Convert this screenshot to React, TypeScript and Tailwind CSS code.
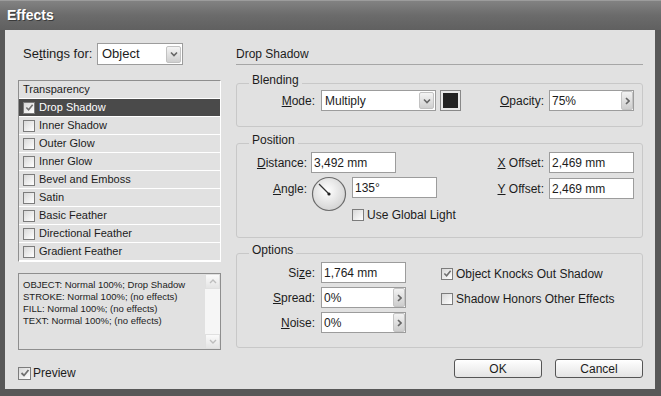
import React from 'react';

// small checkbox, XP style
const Check = ({ checked = false }: { checked?: boolean }) => (
    <span className="w-[12px] h-[12px] shrink-0 border border-[#7c7c7c] bg-linear-to-br from-[#d8d8d8] to-white flex items-center justify-center">
        {checked && (
            <svg width="9" height="9" viewBox="0 0 10 10">
                <path d="M1.5 5 L4 7.5 L8.5 2" stroke="#707070" strokeWidth="1.8" fill="none" />
            </svg>
        )}
    </span>
);

const DropBtn = () => (
    <span className="w-[15px] h-[17px] shrink-0 rounded-[2px] bg-linear-to-b from-[#f4f4f4] to-[#cfcfcf] border border-[#c2c2c2] flex items-center justify-center">
        <svg width="8" height="6" viewBox="0 0 8 6">
            <path d="M1 1.5 L4 4.5 L7 1.5" stroke="#666" strokeWidth="1.6" fill="none" />
        </svg>
    </span>
);

const SpinBtn = () => (
    <span className="w-[12px] h-[19px] shrink-0 rounded-[2px] bg-linear-to-b from-[#f2f2f2] to-[#cdcdcd] border border-[#c4c4c4] flex items-center justify-center">
        <svg width="5" height="8" viewBox="0 0 5 8">
            <path d="M1 1 L4 4 L1 7" stroke="#666" strokeWidth="1.6" fill="none" />
        </svg>
    </span>
);

const Field = ({ value, spin = false }: { value: string; spin?: boolean }) => (
    <div className="w-[85px] h-[21px] bg-white border border-[#9c9c9c] flex items-center pl-[2px] pr-[0px] text-[12px]">
        <span className="flex-1">{value}</span>
        {spin && <SpinBtn />}
    </div>
);

const Group = ({ title, height, children }: { title: string; height: string; children: React.ReactNode }) => (
    <div className={`${height} rounded-[3px] border border-[#c8c8c8] flex flex-col`}>
        <div className="-mt-[11px] ml-[12px] px-[3px] w-fit bg-[#e1e1e1] leading-[14px] text-[12px]">
            {title}
        </div>
        {children}
    </div>
);

const effects = [
    'Drop Shadow',
    'Inner Shadow',
    'Outer Glow',
    'Inner Glow',
    'Bevel and Emboss',
    'Satin',
    'Basic Feather',
    'Directional Feather',
    'Gradient Feather',
];

const summary = [
    'OBJECT: Normal 100%; Drop Shadow',
    'STROKE: Normal 100%; (no effects)',
    'FILL: Normal 100%; (no effects)',
    'TEXT: Normal 100%; (no effects)',
];

export default function App() {
    return (
        <div className="w-[661px] h-[396px] bg-[#585858] flex flex-col font-['Liberation_Sans',Arial,sans-serif] text-[#1c1c1c] select-none">
            {/* title bar */}
            <div className="h-[30px] shrink-0 border-t border-[#9c9c9c] bg-linear-to-b from-[#828282] via-[#6b6b6b] to-[#606060] flex items-center pl-[7px]">
                <span className="text-white font-bold text-[14px] [text-shadow:1px_1px_0_#3a3a3a]">Effects</span>
            </div>

            <div className="flex-1 ml-[5px] mr-[6px] mb-[7px] bg-[#e1e1e1] flex pl-[13px] pt-[13px]">
                {/* left side */}
                <div className="w-[203px] flex flex-col">
                    <div className="h-[22px] flex items-center text-[13px]">
                        <span className="ml-[5px] w-[74px]">
                            Se<u>t</u>tings for:
                        </span>
                        <div className="w-[86px] h-[22px] bg-white border border-[#9c9c9c] flex items-center pl-[4px] pr-[1px]">
                            <span className="flex-1">Object</span>
                            <DropBtn />
                        </div>
                    </div>

                    <div className="mt-[15px] h-[182px] border border-t-[#8e8e8e] border-l-[#8e8e8e] border-r-white border-b-white text-[11px]">
                        <div className="h-[18px] border-b border-white flex items-center pl-[4px]">Transparency</div>
                        {effects.map((name, i) => (
                            <div
                                key={name}
                                className={
                                    i === 0
                                        ? 'h-[18px] border-b border-white flex items-center pl-[4px] gap-[4px] bg-[#4a4a4a] text-white'
                                        : 'h-[18px] border-b border-white flex items-center pl-[4px] gap-[4px]'
                                }
                            >
                                <Check checked={i === 0} />
                                <span>{name}</span>
                            </div>
                        ))}
                    </div>

                    <div className="mt-[11px] h-[77px] border border-[#8e8e8e] flex">
                        <div className="flex-1 pt-[5px] pl-[4px] text-[9.5px] leading-[12px]">
                            {summary.map(line => (
                                <div key={line}>{line}</div>
                            ))}
                        </div>
                        <div className="w-[15px] bg-[#f6f6f6] flex flex-col justify-between">
                            <span className="h-[15px] bg-linear-to-b from-[#fafafa] to-[#e4e4e4] border border-[#e0e0e0] flex items-center justify-center">
                                <svg width="8" height="5" viewBox="0 0 8 5">
                                    <path d="M1 4 L4 1 L7 4" stroke="#bdbdbd" strokeWidth="1.4" fill="none" />
                                </svg>
                            </span>
                            <span className="h-[15px] bg-linear-to-b from-[#fafafa] to-[#e4e4e4] border border-[#e0e0e0] flex items-center justify-center">
                                <svg width="8" height="5" viewBox="0 0 8 5">
                                    <path d="M1 1 L4 4 L7 1" stroke="#bdbdbd" strokeWidth="1.4" fill="none" />
                                </svg>
                            </span>
                        </div>
                    </div>

                    <div className="mt-[14px] flex items-center gap-[2px] text-[12px]">
                        <span className="w-[13px] h-[13px] border border-[#7c7c7c] bg-linear-to-br from-[#d8d8d8] to-white flex items-center justify-center">
                            <svg width="10" height="10" viewBox="0 0 10 10">
                                <path d="M1.5 5 L4 7.5 L8.5 2" stroke="#707070" strokeWidth="1.8" fill="none" />
                            </svg>
                        </span>
                        <span>Preview</span>
                    </div>
                </div>

                {/* right side */}
                <div className="ml-[15px] w-[407px] flex flex-col text-[12px]">
                    <div className="h-[22px] border-b border-[#a6a6a6] flex items-center">Drop Shadow</div>

                    <div className="mt-[18px]">
                        <Group title="Blending" height="h-[44px]">
                            <div className="mt-[3px] h-[21px] flex items-center pr-[8px]">
                                <span className="w-[78px] text-right">
                                    <u>M</u>ode:
                                </span>
                                <div className="ml-[6px] w-[115px] h-[21px] bg-white border border-[#9c9c9c] flex items-center pl-[3px] pr-[1px]">
                                    <span className="flex-1">Multiply</span>
                                    <DropBtn />
                                </div>
                                <span className="ml-[4px] w-[21px] h-[21px] border border-[#888] bg-[#e8e8e8] p-[2px]">
                                    <span className="block w-full h-full bg-[#222]" />
                                </span>
                                <span className="ml-auto mr-[5px]">
                                    <u>O</u>pacity:
                                </span>
                                <Field value="75%" spin />
                            </div>
                        </Group>
                    </div>

                    <div className="mt-[16px]">
                        <Group title="Position" height="h-[95px]">
                            <div className="mt-[5px] flex pr-[8px]">
                                <div className="w-[70px] flex flex-col items-end gap-[5px]">
                                    <span className="h-[21px] flex items-center">
                                        <u>D</u>istance:
                                    </span>
                                    <span className="h-[21px] flex items-center">
                                        <u>A</u>ngle:
                                    </span>
                                </div>
                                <div className="ml-[4px] flex flex-col">
                                    <Field value="3,492 mm" />
                                    <div className="mt-[4px] flex">
                                        <svg width="36" height="36" viewBox="0 0 36 36" className="-mt-[1px]">
                                            <defs>
                                                <radialGradient id="dial" cx="45%" cy="40%" r="60%">
                                                    <stop offset="0%" stopColor="#ffffff" />
                                                    <stop offset="100%" stopColor="#d4d4d4" />
                                                </radialGradient>
                                            </defs>
                                            <circle cx="18" cy="18" r="16.5" fill="url(#dial)" stroke="#6c6c6c" strokeWidth="1.2" />
                                            <line x1="18" y1="18" x2="8" y2="8" stroke="#333" strokeWidth="1.2" />
                                            <circle cx="18" cy="18" r="1.6" fill="#222" />
                                        </svg>
                                        <div className="ml-[5px] flex flex-col">
                                            <Field value="135°" />
                                            <div className="mt-[8px] flex items-center gap-[3px]">
                                                <Check />
                                                <span>Use Global Light</span>
                                            </div>
                                        </div>
                                    </div>
                                </div>
                                <div className="ml-auto flex gap-[5px]">
                                    <div className="flex flex-col items-end gap-[5px]">
                                        <span className="h-[21px] flex items-center">
                                            <u>X</u>&nbsp;Offset:
                                        </span>
                                        <span className="h-[21px] flex items-center">
                                            <u>Y</u>&nbsp;Offset:
                                        </span>
                                    </div>
                                    <div className="flex flex-col gap-[5px]">
                                        <Field value="2,469 mm" />
                                        <Field value="2,469 mm" />
                                    </div>
                                </div>
                            </div>
                        </Group>
                    </div>

                    <div className="mt-[15px]">
                        <Group title="Options" height="h-[95px]">
                            <div className="mt-[5px] flex">
                                <div className="w-[78px] flex flex-col items-end gap-[4px]">
                                    <span className="h-[21px] flex items-center">
                                        Si<u>z</u>e:
                                    </span>
                                    <span className="h-[21px] flex items-center">
                                        <u>S</u>pread:
                                    </span>
                                    <span className="h-[21px] flex items-center">
                                        <u>N</u>oise:
                                    </span>
                                </div>
                                <div className="ml-[6px] flex flex-col gap-[4px]">
                                    <Field value="1,764 mm" />
                                    <Field value="0%" spin />
                                    <Field value="0%" spin />
                                </div>
                                <div className="ml-[35px] flex flex-col gap-[4px] pt-[1px]">
                                    <div className="h-[21px] flex items-center gap-[3px]">
                                        <Check checked />
                                        <span>Object Knocks Out Shadow</span>
                                    </div>
                                    <div className="h-[21px] flex items-center gap-[3px]">
                                        <Check />
                                        <span>Shadow Honors Other Effects</span>
                                    </div>
                                </div>
                            </div>
                        </Group>
                    </div>

                    <div className="mt-[11px] flex justify-end gap-[13px]">
                        <button className="w-[88px] h-[19px] rounded-[3px] border border-[#555] bg-linear-to-b from-white to-[#e4e4e4] text-[12px] leading-none">
                            OK
                        </button>
                        <button className="w-[88px] h-[19px] rounded-[3px] border border-[#555] bg-linear-to-b from-white to-[#e4e4e4] text-[12px] leading-none">
                            Cancel
                        </button>
                    </div>
                </div>
            </div>
        </div>
    );
}
